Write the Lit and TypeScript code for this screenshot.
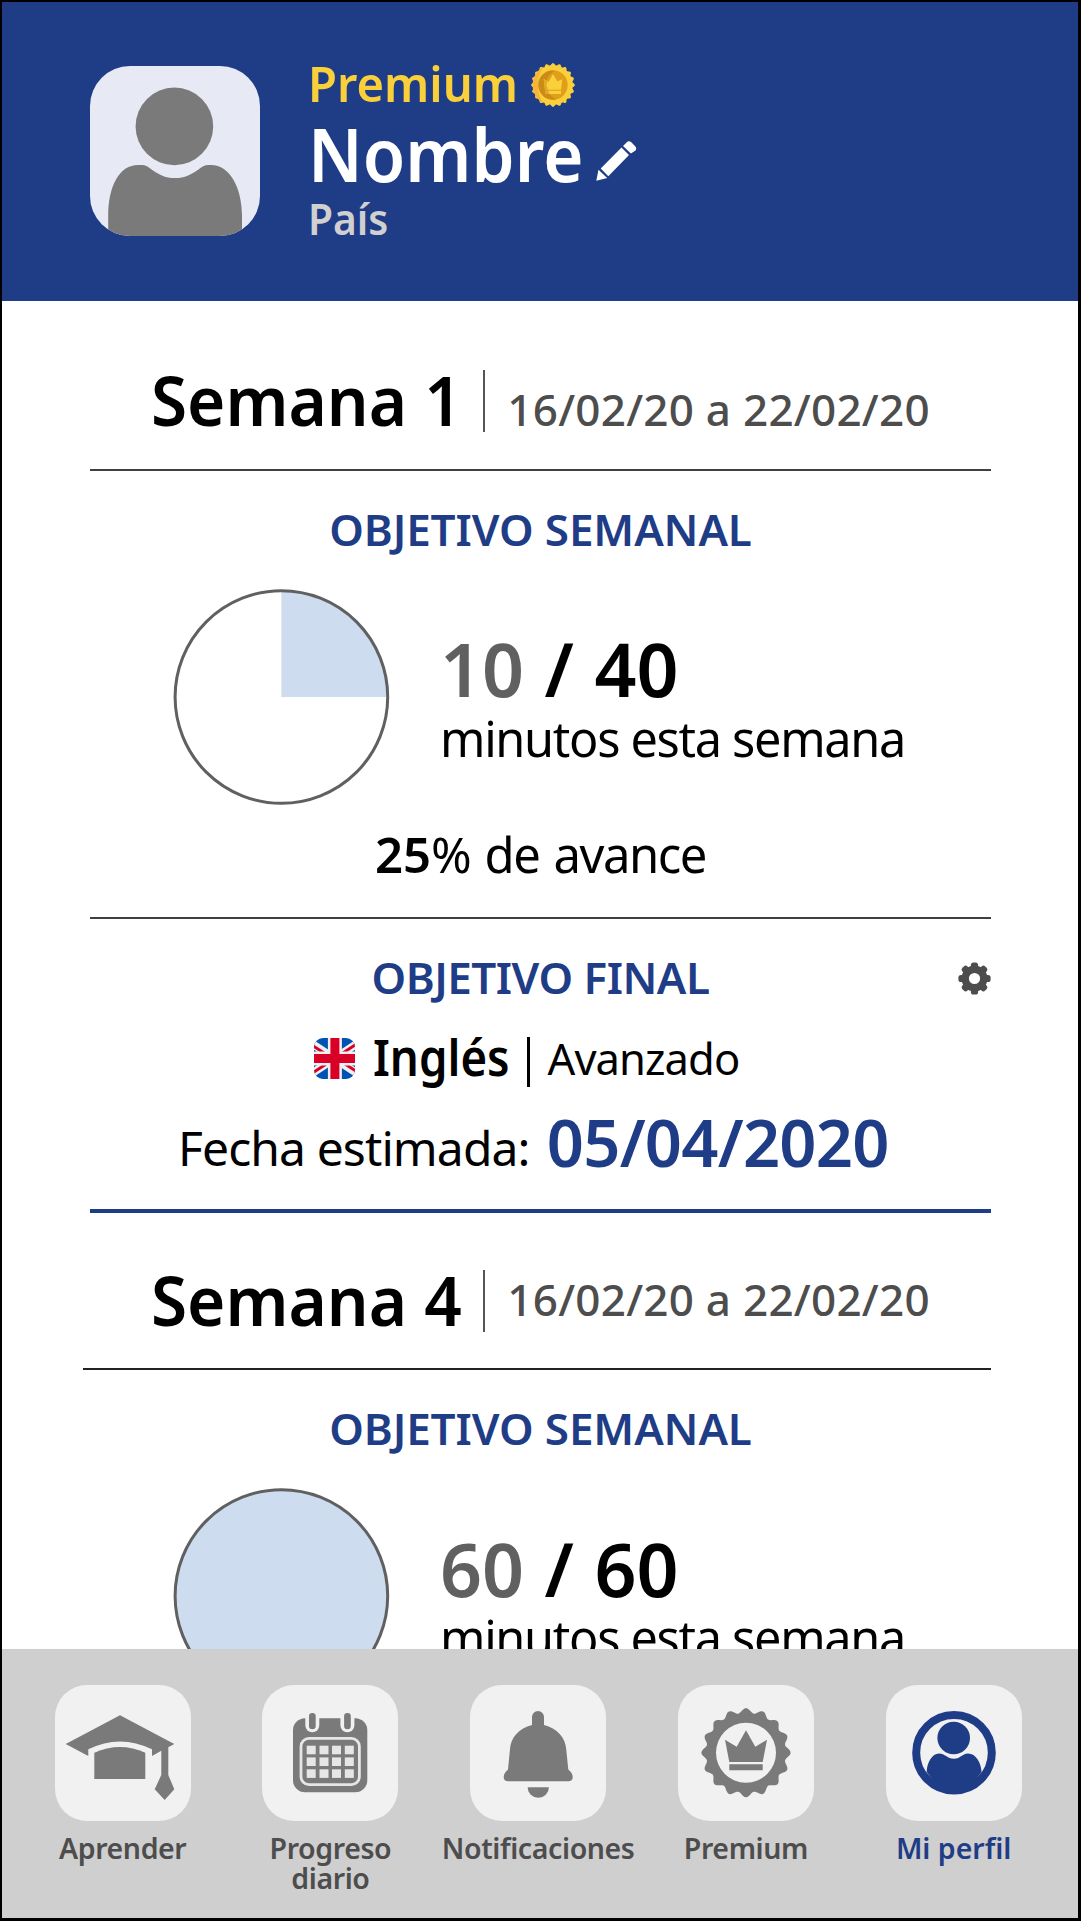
import { LitElement, html, css, svg, nothing } from "lit";
import { customElement, property } from "lit/decorators.js";

/** Closed outline of a scalloped disc with `n` rounded teeth. */
function scallop(cx: number, cy: number, r: number, amp: number, n: number): string {
  const steps = n * 12;
  let d = "";
  for (let i = 0; i < steps; i++) {
    const a = (i / steps) * Math.PI * 2;
    const q = r + amp * Math.cos(n * a);
    d += `${i ? "L" : "M"}${(cx + q * Math.sin(a)).toFixed(2)} ${(cy - q * Math.cos(a)).toFixed(2)}`;
  }
  return d + "Z";
}

const avatarIcon = svg`<svg class="avatar" viewBox="0 0 170 170">
  <rect width="170" height="170" fill="#e7eaf4"/>
  <g fill="#7a7a7a"><circle cx="84.4" cy="60.4" r="38.8"/>
  <path d="M18.2 170V150C18.2 119 30 99 48 99C53 99 55.500 99 58.500 101.200C69 109 75 112 85 112C95 112 101 109 111.500 101.200C114.500 99 117 99 121 99C140 99 152 122 152 150V170Z"/></g>
</svg>`;

const medalIcon = svg`<svg class="medal" viewBox="0 0 44 44">
  <path d="${scallop(22, 22, 20.8, 1.1, 20)}" fill="#fad03a"/>
  <path d="M13 3.500C6 7 1.600 14 1.600 22C1.600 30 6 37 13 40.500C8.500 35 7 29 7 22C7 15 8.500 9 13 3.500Z" fill="#f6b43a"/>
  <circle cx="22" cy="22" r="14.700" fill="#e09f1a"/>
  <path d="M17 8.200A14.700 14.700 0 0 0 17 35.800C20 36.700 23 36.900 25 36.400C18 32 15 27 15 22C15 16 18 11 24 7.500C21.500 7.200 19 7.500 17 8.200Z" fill="#c98c16"/>
  <path d="M12.700 16L17.700 18.700L22 11L26.500 18.500L31.300 16L30 26.700H14ZM14 27.700H30V31H14Z" fill="#fad03a"/>
  <path d="M12.700 16L16.500 18L15.500 22L17 26.700H14ZM14 27.700H17.300L18.500 31H14Z" fill="#e0a92a"/>
</svg>`;

const pencilIcon = svg`<svg class="pencil" viewBox="0 0 41 41" fill="#fff">
  <path d="M.3 40.700L2.500 29.700L11.200 38ZM4.700 28.600L25.500 7.400L33 14.900L12.300 36.300Z"/>
  <path d="M27 5.900L30.500 2.500C32 1 33.800 1 35.300 2.300L39.200 6.200C40.600 7.700 40.500 9.500 39.200 10.700L34.900 13.600Z"/>
</svg>`;

const gearIcon = svg`<svg class="gear" viewBox="0 0 33 33" fill="none">
  <circle cx="16.500" cy="16.500" r="9.300" stroke="#4d4d4d" stroke-width="7.400"/>
  <g fill="#4d4d4d">${[0, 45, 90, 135, 180, 225, 270, 315].map(
    (a) => svg`<rect x="12.900" y="0.400" width="7.200" height="7" rx="2.600" transform="rotate(${a} 16.5 16.5)"/>`
  )}</g>
</svg>`;

const flagIcon = svg`<svg class="flag" viewBox="0 0 41 41">
  <rect width="41" height="41" fill="#0052b4"/>
  <path d="M-10 .5L51 40.500M51 .5L-10 40.500" stroke="#f0f0f0" stroke-width="8"/>
  <path d="M-10 2L17 19.500M51 39L25 22M51 .5L25 17.500M-10 40.500L16 23.500" stroke="#d80027" stroke-width="3"/>
  <path d="M20.900 0V41M0 20.500H41" stroke="#f0f0f0" stroke-width="14"/>
  <path d="M20.900 0V41M0 20.500H41" stroke="#d80027" stroke-width="9"/>
</svg>`;

const capIcon = svg`<svg viewBox="0 0 136 136" fill="#7a7a7a">
  <path d="M10.700 59L65 30.300L119.300 59L113.300 62.200V90L119.300 104.300L109.700 115L99.700 104.300L106.300 90V65.700L97 71V64.300Q65 48.500 33.300 64.300V71Z"/>
  <path d="M39.300 67.700Q65 56.500 90.300 67.700V94H39.300Z"/>
</svg>`;

const calendarIcon = svg`<svg viewBox="0 0 136 136">
  <rect x="31" y="33.300" width="74.300" height="74" rx="12" fill="#7a7a7a"/>
  <g fill="#f1f1f1"><rect x="43.300" y="26" width="14" height="21.300" rx="7"/><rect x="78.400" y="26" width="14" height="21.300" rx="7"/></g>
  <g fill="#7a7a7a"><rect x="47" y="28" width="6.700" height="16.200" rx="3.300"/><rect x="82.100" y="28" width="6.700" height="16.200" rx="3.300"/></g>
  <rect x="39" y="53.400" width="58.400" height="46.200" rx="8" fill="none" stroke="#e6e6e6" stroke-width="2.800"/>
  <g fill="#e6e6e6">${[60.7, 72.4, 84.3].map((y) =>
    [44.7, 57.5, 70, 82.8].map((x) => svg`<rect x="${x}" y="${y}" width="9" height="8.600"/>`)
  )}</g>
</svg>`;

const bellIcon = svg`<svg viewBox="0 0 136 136" fill="#7a7a7a">
  <path d="M62 40V32A6 6 0 0 1 74 32V40C87 43 95.500 53 96.200 64L98.300 84.500C101 87 102.700 89 102.700 92C102.700 94.800 101 96.300 98.500 96.300H38C35.400 96.300 33.700 94.800 33.700 92C33.700 89 35.500 87 38 84.500L40 64C40.600 53 49 43 62 40Z"/>
  <path d="M57.700 102.200H78.900A10.600 10.600 0 0 1 57.700 102.200Z"/>
</svg>`;

const premiumIcon = svg`<svg viewBox="0 0 136 136" fill="#7a7a7a">
  <path fill-rule="evenodd" d="${scallop(68, 67.7, 42.2, 2.4, 16)}M98 67.700A30 30 0 1 0 38 67.700A30 30 0 1 0 98 67.700Z"/>
  <path d="M47 54.700L58.700 61.700L68 45.300L77.300 61.700L89 54.700L84.700 77H51.300ZM51.300 79.200H84.700V85.300H51.300Z"/>
</svg>`;

const profileIcon = svg`<svg viewBox="0 0 136 136" fill="#1f3c86">
  <circle cx="68" cy="67.700" r="37.800" fill="none" stroke="#1f3c86" stroke-width="8"/>
  <circle cx="67.700" cy="53" r="16.300"/>
  <path d="M40.700 86.700C41 78 46 68.600 53 68.600C59 68.600 61 73.800 68 73.800C74.500 73.800 76.500 68.600 82 68.600C90 68.600 95 78 95.500 86.700C89 97 80 103 68 103C56 103 47 97 40.700 86.700Z"/>
</svg>`;

@customElement("profile-header")
class ProfileHeader extends LitElement {
  static styles = css`
    :host { display: flex; box-sizing: border-box; height: 299px; padding-left: 88px; gap: 48px; background: #1f3c86; font-weight: 600; }
    .avatar { width: 170px; height: 170px; margin-top: 64px; border-radius: 40px; flex: none; }
    .info { padding-top: 56px; display: flex; flex-direction: column; }
    .line { display: flex; align-items: flex-start; }
    .text { transform-origin: left; white-space: nowrap; }
    .plan { font-size: 49px; line-height: 50px; width: 223px; color: #fad03a; transform: scaleX(0.962); }
    .name-line { margin-top: 8px; }
    .name { font-size: 74px; line-height: 75px; width: 288px; color: #fff; transform: scaleX(0.932); }
    .country { font-size: 44px; line-height: 44px; margin-top: 5px; color: #d0d0d0; transform: scaleX(0.925); }
    .medal { width: 44px; height: 44px; margin-top: 5px; }
    .pencil { width: 41px; height: 41px; margin-top: 24.300px; }
  `;
  render() {
    return html`${avatarIcon}
      <div class="info">
        <div class="line"><span class="text plan">Premium</span>${medalIcon}</div>
        <div class="line name-line"><span class="text name">Nombre</span>${pencilIcon}</div>
        <span class="text country">País</span>
      </div>`;
  }
}

@customElement("week-summary")
class WeekSummary extends LitElement {
  @property({ type: Number }) week = 1;
  @property() range = "";
  @property({ type: Number }) done = 0;
  @property({ type: Number }) goal = 1;
  @property({ type: Boolean, reflect: true }) past = false;

  static styles = css`
    :host { display: block; border-bottom: 2px solid #404040; padding-bottom: 37.300px; }
    .title { display: grid; grid-template-columns: 61px 332.300px 24px 1fr; align-items: start; height: 70px; padding: 63.200px 0 34.800px; border-bottom: 2px solid #404040; white-space: nowrap; }
    :host([past]) .title { padding-top: 50.500px; padding-bottom: 33.800px; margin-left: -7px; padding-left: 7px; border-bottom-color: #222; }
    .name { grid-column: 2; font-size: 69px; line-height: 71px; font-weight: 600; transform: scaleX(0.951); transform-origin: left; }
    .bar { width: 2px; height: 62px; margin-top: 6px; background: #555; }
    .range { font-size: 44px; line-height: 44px; margin-top: 22.700px; font-weight: 500; letter-spacing: 0.250px; color: #4d4d4d; }
    :host([past]) .range { margin-top: 13.600px; }
    .heading { margin-top: 36.500px; text-align: center; font-size: 44px; line-height: 44px; font-weight: 600; letter-spacing: -0.100px; color: #1f3c86; }
    .stat { display: flex; gap: 50.500px; height: 216px; margin-top: 37.500px; padding-left: 83.500px; }
    :host([past]) .stat { margin-top: 38.300px; }
    .pie { width: 216px; height: 216px; flex: none; }
    .count { font-size: 73.500px; line-height: 74px; font-weight: 600; margin-top: 43.300px; word-spacing: 1.400px; white-space: nowrap; }
    .done { color: #606060; }
    .unit { font-size: 48.600px; line-height: 49px; margin-top: 7.800px; letter-spacing: -1.300px; white-space: nowrap; }
    .progress { margin: 24px 0 0 285px; padding-bottom: 1px; font-size: 49px; line-height: 50px; letter-spacing: -1.500px; word-spacing: 3px; white-space: nowrap; }
    .progress b { font-weight: 600; letter-spacing: 0; }
  `;
  render() {
    const ratio = this.done / this.goal;
    const a = ratio * Math.PI * 2;
    const cx = 107.4;
    const slice = ratio >= 1
      ? svg`<circle cx="${cx}" cy="108" r="106" fill="#cddcee"/>`
      : svg`<path d="M${cx} 108V2A106 106 0 ${ratio > 0.5 ? 1 : 0} 1 ${cx + 106 * Math.sin(a)} ${108 - 106 * Math.cos(a)}Z" fill="#cddcee"/>`;
    return html`
      <div class="title"><span class="name">Semana ${this.week}</span><span class="bar"></span><span class="range">${this.range}</span></div>
      <div class="heading">OBJETIVO SEMANAL</div>
      <div class="stat">
        <svg class="pie" viewBox="0 0 216 216" overflow="visible">${slice}<circle cx="${cx}" cy="108" r="106.300" fill="none" stroke="#606060" stroke-width="3"/></svg>
        <div>
          <div class="count"><span class="done">${this.done}</span> / ${this.goal}</div>
          <div class="unit">minutos esta semana</div>
        </div>
      </div>
      ${this.past ? nothing : html`<div class="progress"><b>${ratio * 100}</b>% de avance</div>`}`;
  }
}

@customElement("final-goal")
class FinalGoal extends LitElement {
  static styles = css`
    :host { display: block; box-sizing: border-box; height: 294px; padding-top: 35.700px; border-bottom: 4px solid #1f3c86; white-space: nowrap; }
    .head { display: grid; grid-template-columns: 1fr auto 1fr; height: 44px; }
    .heading { grid-column: 2; font-size: 44px; line-height: 44px; font-weight: 600; letter-spacing: -0.500px; color: #1f3c86; }
    .gear { width: 33px; height: 33px; justify-self: end; margin-top: 6.800px; }
    .language { display: grid; grid-template-columns: 224.300px 59.200px 153.500px 20.500px auto; align-items: start; height: 50px; margin-top: 32px; }
    .flag { grid-column: 2; width: 41px; height: 41px; border-radius: 9px; margin-top: 7.400px; }
    .lang { font-size: 50px; line-height: 52px; font-weight: 600; transform: scaleX(0.912); transform-origin: left; }
    .bar { width: 3px; height: 50px; margin-top: 6.400px; background: #000; }
    .level { font-size: 43.500px; line-height: 44px; margin-top: 5px; letter-spacing: -0.900px; }
    .date { display: grid; grid-template-columns: 88px 368.800px auto; align-items: start; height: 65px; margin-top: 28.700px; }
    .label { grid-column: 2; font-size: 48px; line-height: 50px; margin-top: 13px; letter-spacing: -0.900px; }
    .value { font-size: 65px; line-height: 65px; font-weight: 600; letter-spacing: -0.750px; color: #1f3c86; }
  `;
  render() {
    return html`
      <div class="head"><span class="heading">OBJETIVO FINAL</span>${gearIcon}</div>
      <div class="language">${flagIcon}<span class="lang">Inglés</span><span class="bar"></span><span class="level">Avanzado</span></div>
      <div class="date"><span class="label">Fecha estimada:</span><span class="value">05/04/2020</span></div>`;
  }
}

@customElement("nav-bar")
class NavBar extends LitElement {
  static styles = css`
    :host { display: grid; grid-template-columns: repeat(5, 207.750px); box-sizing: border-box; height: 269px; padding: 36px 0 0 16.800px; background: #cfcfcf; }
    .item { display: flex; flex-direction: column; align-items: center; gap: 12px; color: #4d4d4d; font-size: 28.500px; line-height: 30px; font-weight: 600; letter-spacing: -0.400px; text-align: center; }
    .item.active { color: #1f3c86; letter-spacing: 0; }
    .tile { width: 136px; height: 136px; border-radius: 32px; background: #f1f1f1; flex: none; }
    .tile svg { display: block; width: 136px; height: 136px; }
    .label { white-space: pre-line; }
  `;
  private items = [
    { label: "Aprender", icon: capIcon },
    { label: "Progreso\ndiario", icon: calendarIcon },
    { label: "Notificaciones", icon: bellIcon },
    { label: "Premium", icon: premiumIcon },
    { label: "Mi perfil", icon: profileIcon, active: true },
  ];
  render() {
    return this.items.map(
      (i) => html`<div class="item ${i.active ? "active" : ""}"><span class="tile">${i.icon}</span><span class="label">${i.label}</span></div>`
    );
  }
}

@customElement("app-root")
class AppRoot extends LitElement {
  static styles = css`
    :host { display: flex; flex-direction: column; box-sizing: border-box; width: 1081px; height: 1921px; overflow: hidden; border: solid #000; border-width: 2px 3px 3px 2px; background: #fff; color: #000; font-family: "Noto Sans", "Open Sans", sans-serif; }
    .content { height: 1348px; overflow: hidden; padding: 0 87px 0 88px; box-sizing: border-box; flex: none; }
  `;
  render() {
    return html`
      <profile-header></profile-header>
      <div class="content">
        <week-summary .week=${1} .range=${"16/02/20 a 22/02/20"} .done=${10} .goal=${40}></week-summary>
        <final-goal></final-goal>
        <week-summary past .week=${4} .range=${"16/02/20 a 22/02/20"} .done=${60} .goal=${60}></week-summary>
      </div>
      <nav-bar></nav-bar>`;
  }
}
